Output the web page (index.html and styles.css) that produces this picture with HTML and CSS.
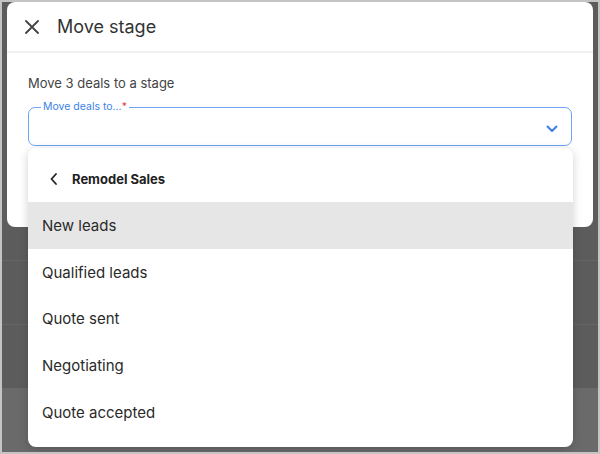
FILE: index.html
```html
<!DOCTYPE html>
<html lang="en">
<head>
    <meta charset="UTF-8">
    <title>Move stage</title>
    <link rel="stylesheet" href="styles.css">
</head>
<body>

<div class="frame">
    <!-- page behind the overlay -->
    <div class="backdrop">
        <div class="bg-top"></div>
        <div class="bg-row"></div>
        <div class="bg-row"></div>
        <div class="bg-band"></div>
    </div>

    <!-- dialog -->
    <div class="modal">
        <div class="modal-header">
            <svg class="close-icon" width="14" height="14" viewBox="0 0 14 14">
                <path d="M1 1 L13 13 M13 1 L1 13" stroke="#444" stroke-width="1.8" fill="none" stroke-linecap="round"/>
            </svg>
            <span class="modal-title">Move stage</span>
        </div>
        <div class="modal-body">
            <p class="hint">Move 3 deals to a stage</p>
            <fieldset class="select-field">
                <legend>Move deals to...<span class="req">*</span></legend>
                <svg class="chevron" width="12" height="8" viewBox="0 0 12 8">
                    <path d="M1.5 1.5 L6 6 L10.5 1.5" stroke="#3f7fe6" stroke-width="2" fill="none" stroke-linecap="round" stroke-linejoin="round"/>
                </svg>
            </fieldset>
        </div>
    </div>

    <!-- dropdown menu -->
    <div class="menu">
        <div class="menu-header">
            <svg class="back-icon" width="8" height="12" viewBox="0 0 8 12">
                <path d="M6 1 L1.5 6 L6 11" stroke="#222" stroke-width="1.8" fill="none" stroke-linecap="round" stroke-linejoin="round"/>
            </svg>
            <span>Remodel Sales</span>
        </div>
        <ul class="menu-list">
            <li class="active">New leads</li>
            <li>Qualified leads</li>
            <li>Quote sent</li>
            <li>Negotiating</li>
            <li>Quote accepted</li>
        </ul>
    </div>
</div>

</body>
</html>
```

FILE: styles.css
```css
body {
    margin: 0;
    font-family: Inter, "Open Sans", Arial, sans-serif;
    background-color: #c4c4c4;
}

.frame {
    width: 600px;
    height: 454px;
    box-sizing: border-box;
    border: 2px solid #c4c4c4;
    position: relative;
    overflow: hidden;
}

.backdrop {
    display: flex;
    flex-direction: column;
    height: 100%;
    background-color: #5c5c5c;
}

.bg-top {
    height: 258px;
}

.bg-row {
    height: 63px;
    border-top: 1px solid #666;
}

.bg-band {
    flex: 1;
    background-color: #6a6a6a;
}

.modal {
    position: absolute;
    left: 5px;
    top: 0;
    width: 586px;
    height: 225px;
    background-color: #fff;
    border-radius: 8px;
}

.modal-header {
    height: 49px;
    border-bottom: 2px solid #f1f1f1;
    display: flex;
    align-items: center;
    padding-left: 18px;
}

.close-icon {
    margin-right: 18px;
}

.modal-title {
    font-size: 18px;
    color: #333;
}

.modal-body {
    padding: 0 21px;
}

.hint {
    margin: 22px 0 11px;
    font-size: 13px;
    color: #444;
}

.select-field {
    margin: 0;
    height: 44px;
    box-sizing: border-box;
    border: 1.5px solid #6aa4f2;
    border-radius: 7px;
    padding: 0 12px;
    position: relative;
}

.select-field legend {
    font-size: 10.5px;
    color: #3d82ea;
    padding: 0 2px;
    margin-left: 0;
    line-height: 10px;
}

.req {
    color: #e04444;
}

.chevron {
    position: absolute;
    right: 13px;
    top: 13px;
}

.menu {
    position: absolute;
    left: 26px;
    top: 146px;
    width: 545px;
    height: 299px;
    background-color: #fff;
    border-radius: 8px;
    box-shadow: 0 2px 10px rgba(0, 0, 0, 0.18);
}

.menu-header {
    height: 46px;
    margin-top: 8px;
    display: flex;
    align-items: center;
    padding-left: 22px;
    font-size: 13px;
    font-weight: 700;
    color: #222;
}

.back-icon {
    margin-right: 14px;
}

.menu-list {
    list-style: none;
    margin: 0;
    padding: 0;
}

.menu-list li {
    height: 46.7px;
    display: flex;
    align-items: center;
    padding-left: 14px;
    font-size: 15px;
    color: #2a2a2a;
}

.menu-list li.active {
    background-color: #e6e6e6;
}
```
